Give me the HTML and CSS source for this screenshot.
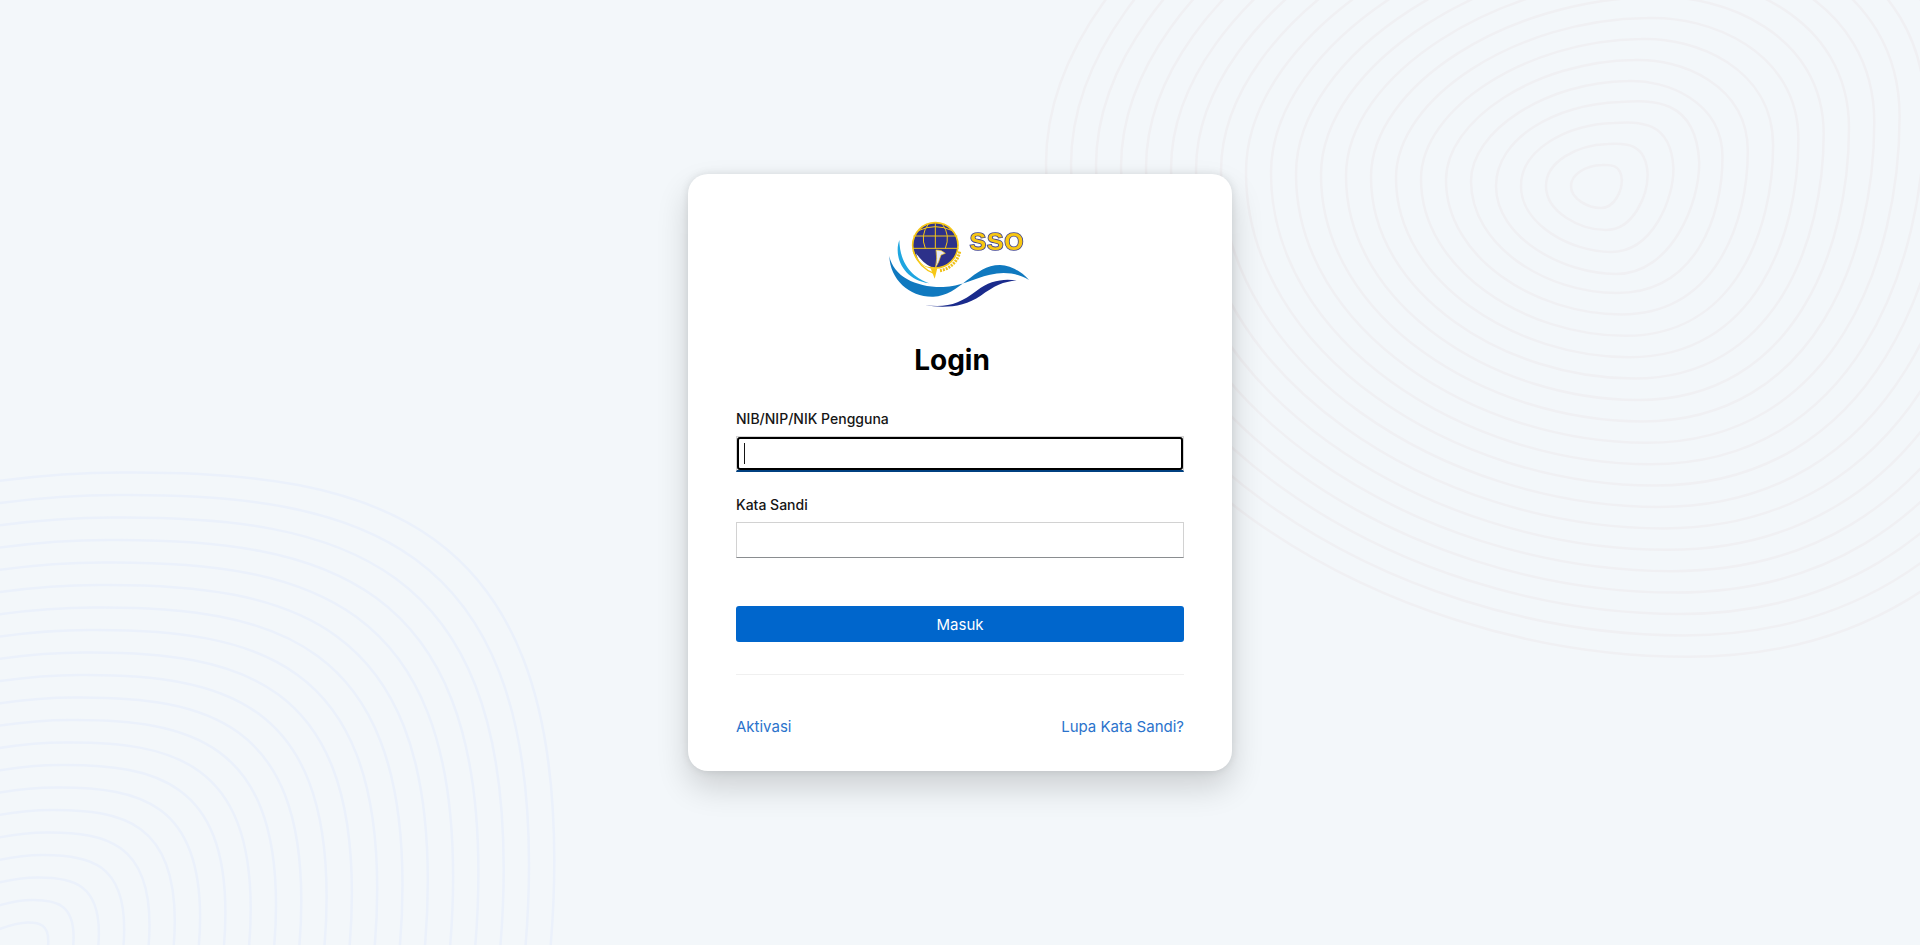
FILE: index.html
```html
<!DOCTYPE html>
<html lang="id">
<head>
<meta charset="utf-8">
<title>Login</title>
<link rel="stylesheet" href="styles.css">
</head>
<body>
<svg class="rings" width="1920" height="945" viewBox="0 0 1920 945" aria-hidden="true">
  <defs>
    <path id="ring-inner" class="ring" d="M6-21C14-21.5 25-22 25.8-6C26 4 19 22 5 22C-8 22-25 13-25 0C-25-12-10-20.5 6-21Z"/>
    <path id="ring-a" class="ring" d="M6.4-21C14-21.3 25.3-17 25.3-5.8C25.3 6 20 21.4 4.2 21.4C-10 21.4-25 12-25-1C-25-11-10-20.8 6.4-21Z"/>
    <path id="ring-b" class="ring" d="M-25-15.5C-15-19-5-22.5 4.7-22.5C17-22.6 25.3-20 25.3-4C25.3-1 25 2 24.5 5"/>
  </defs>
  <g class="rings-pink" transform="translate(1596 186)">
    <use href="#ring-inner" transform="scale(1)"/><use href="#ring-inner" transform="scale(2)"/><use href="#ring-inner" transform="scale(3)"/><use href="#ring-inner" transform="scale(4)"/><use href="#ring-a" transform="scale(5)"/><use href="#ring-a" transform="scale(6)"/><use href="#ring-a" transform="scale(7)"/><use href="#ring-a" transform="scale(8)"/><use href="#ring-a" transform="scale(9)"/><use href="#ring-a" transform="scale(10)"/><use href="#ring-a" transform="scale(11)"/><use href="#ring-a" transform="scale(12)"/><use href="#ring-a" transform="scale(13)"/><use href="#ring-a" transform="scale(14)"/><use href="#ring-a" transform="scale(15)"/><use href="#ring-a" transform="scale(16)"/><use href="#ring-a" transform="scale(17)"/><use href="#ring-a" transform="scale(18)"/><use href="#ring-a" transform="scale(19)"/><use href="#ring-a" transform="scale(20)"/><use href="#ring-a" transform="scale(21)"/><use href="#ring-a" transform="scale(22)"/>
  </g>
  <g class="rings-blue" transform="translate(23 945)">
    <use href="#ring-b" transform="scale(1)"/><use href="#ring-b" transform="scale(2)"/><use href="#ring-b" transform="scale(3)"/><use href="#ring-b" transform="scale(4)"/><use href="#ring-b" transform="scale(5)"/><use href="#ring-b" transform="scale(6)"/><use href="#ring-b" transform="scale(7)"/><use href="#ring-b" transform="scale(8)"/><use href="#ring-b" transform="scale(9)"/><use href="#ring-b" transform="scale(10)"/><use href="#ring-b" transform="scale(11)"/><use href="#ring-b" transform="scale(12)"/><use href="#ring-b" transform="scale(13)"/><use href="#ring-b" transform="scale(14)"/><use href="#ring-b" transform="scale(15)"/><use href="#ring-b" transform="scale(16)"/><use href="#ring-b" transform="scale(17)"/><use href="#ring-b" transform="scale(18)"/><use href="#ring-b" transform="scale(19)"/><use href="#ring-b" transform="scale(20)"/><use href="#ring-b" transform="scale(21)"/>
  </g>
</svg>

<main class="card">
  <svg class="logo" width="150" height="90" viewBox="75 60 450 270" role="img" aria-label="SSO">
    <path class="wave-cyan" d="M118 120C100 170 130 240 208 250C165 235 120 200 118 120Z"/>
    <path class="wave-blue" d="M88 168C90 240 150 292 220 290C300 288 340 195 420 195C450 195 485 215 507 240C470 218 430 215 390 224C340 235 300 260 250 261C170 263 100 230 88 168Z"/>
    <path class="wave-navy" d="M195 315C260 325 300 310 350 272C388 243 430 235 470 242C430 243 402 258 362 287C312 322 250 325 195 315Z"/>
    <path class="gear" d="M299 155A72 72 0 0 1 240 212"/>
    <circle class="globe" cx="226" cy="136" r="68"/>
    <g class="grid">
      <path d="M175 92Q226 68 277 92"/>
      <path d="M160 108H292"/>
      <path d="M158 145H296"/>
      <path d="M226 70V145"/>
      <path d="M205 72Q180 106 196 145"/>
      <path d="M247 72Q272 106 256 145"/>
    </g>
    <path class="bird-white" d="M168 160C182 180 198 194 213 201C192 203 173 184 168 160Z"/>
    <path class="crescent" d="M160 154C172 190 195 210 222 220"/>
    <path class="tail" d="M212 205L224 236L232 205Z"/>
    <path class="dove" d="M228 150Q245 149 256 160L243 165Q237 188 226 204Q233 175 228 150Z"/>
    <text class="logo-text" x="329" y="151" textLength="161">SSO</text>
  </svg>

  <h1 class="title">Login</h1>

  <form class="form">
    <div class="field">
      <label class="label" for="username">NIB/NIP/NIK Pengguna</label>
      <div class="control control--focused">
        <input class="input input--focused" id="username" type="text">
        <span class="caret"></span>
      </div>
    </div>
    <div class="field field--next">
      <label class="label" for="password">Kata Sandi</label>
      <div class="control">
        <input class="input" id="password" type="password">
      </div>
    </div>
    <button class="submit" type="button">Masuk</button>
  </form>

  <hr class="divider">

  <nav class="links">
    <a class="link" href="#">Aktivasi</a>
    <a class="link" href="#">Lupa Kata Sandi?</a>
  </nav>
</main>
</body>
</html>
```
FILE: styles.css
```css
* {
  box-sizing: border-box;
}

html,
body {
  height: 100%;
}

body {
  margin: 0;
  display: flex;
  align-items: center;
  justify-content: center;
  overflow: hidden;
  background: #f3f7fa;
  color: #030303;
  font-family: Inter, "Liberation Sans", sans-serif;
}

.rings {
  position: absolute;
  inset: 0;
}

.ring {
  fill: none;
  stroke-width: 2.5;
  vector-effect: non-scaling-stroke;
}

.rings-pink {
  stroke: #f0f0f3;
}

.rings-blue {
  stroke: #ebf1fb;
}

.card {
  position: relative;
  width: 544px;
  height: 597px;
  padding: 46px 48px 32px;
  background: #fff;
  border-radius: 20px;
  box-shadow: 0 16px 32px rgba(3, 3, 3, 0.16), 0 0 8px rgba(3, 3, 3, 0.1);
}

.logo {
  display: block;
  margin: 0 auto;
  filter: blur(0.3px);
}

.wave-cyan {
  fill: #1fa6e0;
}

.wave-blue {
  fill: #1079bf;
}

.wave-navy {
  fill: #1a2b8c;
}

.gear {
  fill: none;
  stroke: #f0c11a;
  stroke-width: 9;
  stroke-dasharray: 6 3;
}

.globe {
  fill: #2d318a;
  stroke: #f6c716;
  stroke-width: 5;
}

.grid path {
  fill: none;
  stroke: #f6c716;
  stroke-width: 3;
}

.bird-white {
  fill: #fff;
}

.crescent {
  fill: none;
  stroke: #f6c716;
  stroke-width: 4;
}

.tail {
  fill: #f6c716;
}

.dove {
  fill: #e6e8f5;
  stroke: #f6c716;
  stroke-width: 2;
}

.logo-text {
  fill: #f8c712;
  stroke: #3f4290;
  stroke-width: 5;
  paint-order: stroke;
  font-family: "Liberation Sans", sans-serif;
  font-size: 74px;
  font-weight: 700;
}

.title {
  margin: 32px 0 0;
  padding-right: 16px;
  font-size: 28px;
  font-weight: 700;
  line-height: 36px;
  text-align: center;
  color: #000;
}

.form {
  margin-top: 31px;
}

.field--next {
  margin-top: 23px;
}

.label {
  display: block;
  margin-bottom: 7px;
  font-size: 14px;
  font-weight: 500;
  line-height: 20px;
  color: #151515;
}

.control {
  position: relative;
}

.control--focused::after {
  content: "";
  position: absolute;
  inset: 1px 1px 2px;
  border: 2px solid #000;
  border-radius: 3px;
  pointer-events: none;
}

.input {
  display: block;
  width: 100%;
  height: 36px;
  padding: 0 8px;
  background: #fff;
  border: 1px solid #d2d2d2;
  border-bottom-color: #8a8d90;
  border-radius: 0;
  outline: 0;
  font: inherit;
}

.input--focused {
  border-bottom: 2px solid #004080;
}

.caret {
  position: absolute;
  left: 8px;
  top: 7px;
  width: 1px;
  height: 21px;
  background: #151515;
}

.submit {
  display: block;
  width: 100%;
  height: 36px;
  margin-top: 48px;
  background: #06c;
  border: 0;
  border-radius: 3px;
  color: #fff;
  font: inherit;
  font-size: 15px;
}

.divider {
  height: 1px;
  margin: 32px 0 0;
  background: #f0f0f0;
  border: 0;
}

.links {
  display: flex;
  justify-content: space-between;
  margin-top: 40px;
  font-size: 15px;
  line-height: 24px;
}

.link {
  color: #2b73cc;
  text-decoration: none;
}
```
